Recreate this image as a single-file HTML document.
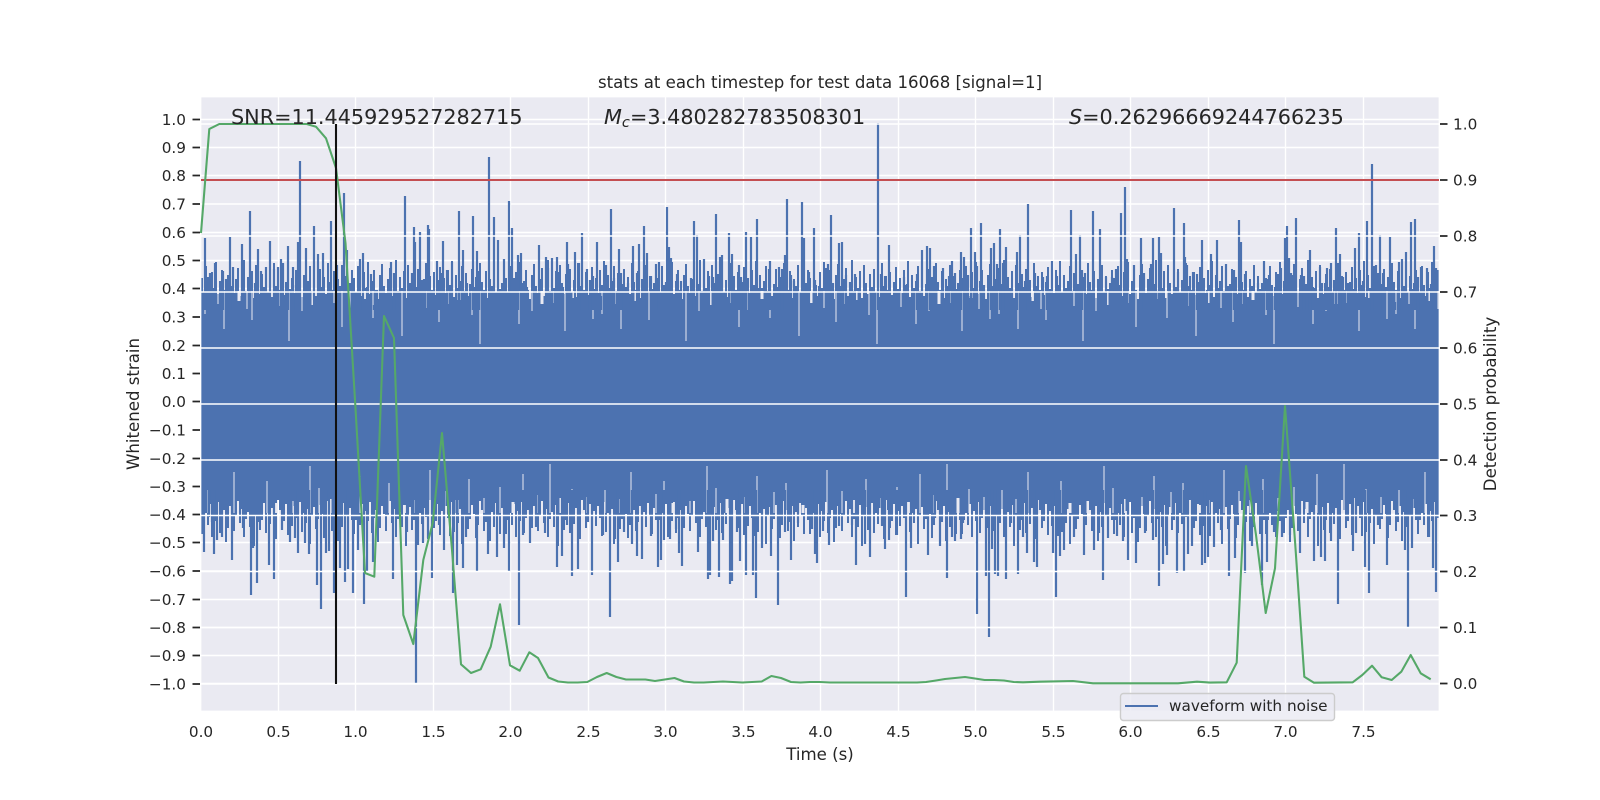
<!DOCTYPE html>
<html>
<head>
<meta charset="utf-8">
<title>stats at each timestep</title>
<style>
html,body{margin:0;padding:0;background:#fff;width:1600px;height:800px;overflow:hidden}
svg{display:block}
text{font-family:"DejaVu Sans","Liberation Sans",sans-serif;fill:#262626}
.t{font-size:15.28px}
.e{text-anchor:end}
.m{text-anchor:middle}
.a{font-size:20.76px}
</style>
</head>
<body>
<svg width="1600" height="800" viewBox="0 0 1600 800" xmlns="http://www.w3.org/2000/svg">
<defs>
<pattern id="band" patternUnits="userSpaceOnUse" x="201" y="0" width="152" height="800">
<path fill="#4c72b0" d="M0 278H2V292H4V266H6V285H8V296H10V272H12V288H14V262H16V294H18V281H20V270H22V290H24V299H26V275H28V264H30V286H32V293H34V279H36V268H38V296H40V284H42V260H44V291H46V277H48V288H50V271H52V298H54V265H56V283H58V294H60V274H62V287H64V269H66V292H68V280H70V297H72V263H74V286H76V276H78V290H80V272H82V295H84V282H86V267H88V289H90V278H92V293H94V270H96V285H98V261H100V297H102V275H104V288H106V281H108V266H110V291H112V273H114V296H116V284H118V269H120V287H122V277H124V294H126V263H128V282H130V290H132V271H134V298H136V279H138V286H140V265H142V292H144V276H146V289H148V283H150V270H152V520H150V508H148V534H146V515H144V503H142V527H140V512H138V541H136V506H134V522H132V531H130V510H128V501H126V525H124V538H122V514H120V505H118V519H116V529H114V507H112V516H110V544H108V509H106V523H104V513H102V532H100V502H98V536H96V518H94V506H92V526H90V511H88V535H86V504H84V521H82V528H80V510H78V500H76V539H74V517H72V508H70V524H68V513H66V533H64V503H62V520H60V530H58V507H56V515H54V546H52V505H50V527H48V512H46V519H44V537H42V509H40V523H38V501H36V516H34V531H32V514H30V506H28V528H26V542H24V510H22V518H20V533H18V502H16V521H14V511H12V537H10V504H8V525H6V513H4V520H2V534H0Z"/>
</pattern>
<pattern id="slits" patternUnits="userSpaceOnUse" x="201" y="0" width="397" height="800">
<path fill="none" stroke="#eaeaf2" stroke-width="1" d="M4 291V314M17 291V304M23 291V329M46 291V309M51 291V320M79 291V306M88 291V341M101 291V311M133 291V303M141 291V327M149 291V310M172 291V318M193 291V306M201 291V336M226 291V308M238 291V322M247 291V304M271 291V315M279 291V344M303 291V307M318 291V324M331 291V311M352 291V303M364 291V331M381 291V309M392 291V319M7 513V490M21 513V499M33 513V472M58 513V494M66 513V481M92 513V501M109 513V466M118 513V488M147 513V497M159 513V476M176 513V492M188 513V483M214 513V500M229 513V470M244 513V491M268 513V479M283 513V498M299 513V487M322 513V474M336 513V495M349 513V462M371 513V489M386 513V497"/>
<path fill="none" stroke="#eaeaf2" stroke-width="3" d="M38 291V301M112 291V305M164 291V299M213 291V303M258 291V300M341 291V304M373 291V298M75 513V503M129 513V499M205 513V505M256 513V500M312 513V502M360 513V498"/>
</pattern>
</defs>
<rect width="1600" height="800" fill="#fff"/>
<rect x="201" y="97" width="1238" height="614" fill="#eaeaf2"/>

<!-- primary grid -->
<path fill="none" stroke="#fff" stroke-width="1.4" d="M278.5 97V711M355.5 97V711M433.5 97V711M510.5 97V711M588.5 97V711M665.5 97V711M743.5 97V711M820.5 97V711M898.5 97V711M975.5 97V711M1053.5 97V711M1130.5 97V711M1208.5 97V711M1285.5 97V711M1363.5 97V711M201 119.5H1439M201 147.5H1439M201 175.5H1439M201 204H1439M201 232.5H1439M201 260.5H1439M201 288.5H1439M201 317H1439M201 345.5H1439M201 373.5H1439M201 401.5H1439M201 430H1439M201 458.5H1439M201 486.5H1439M201 514.5H1439M201 542.5H1439M201 571H1439M201 599.5H1439M201 627.5H1439M201 655.5H1439M201 684H1439"/>

<!-- waveform band -->
<rect x="201" y="250" width="1238" height="310" fill="url(#band)"/>
<rect x="201" y="280" width="1238" height="240" fill="url(#slits)"/>
<rect x="201" y="346" width="1238" height="118" fill="#4c72b0"/>

<!-- waveform spikes up -->
<path fill="none" stroke="#4c72b0" stroke-width="2.2" d="M205 310V238M208 310V277M210 310V273M215 310V263M223 310V271M226 310V279M230 310V237M233 310V267M242 310V244M243 310V282M250 310V211M255 310V283M258 310V249M261 310V271M266 310V267M270 310V241M274 310V269M278 310V267M281 310V259M283 310V263M288 310V246M293 310V267M296 310V285M298 310V242M300 310V161M306 310V248M314 310V226M318 310V254M323 310V253M331 310V221M337 310V265M344 310V193M347 310V250M353 310V282M360 310V259M363 310V253M367 310V287M371 310V274M374 310V305M377 310V290M380 310V288M383 310V311M389 310V288M391 310V262M394 310V273M397 310V294M405 310V196M412 310V273M414 310V227M415 310V242M420 310V232M424 310V279M428 310V225M429 310V229M437 310V261M439 310V280M442 310V273M443 310V241M447 310V270M452 310V262M459 310V211M463 310V250M467 310V283M473 310V216M477 310V251M479 310V271M489 310V157M494 310V217M498 310V240M504 310V259M509 310V201M512 310V228M514 310V278M518 310V255M521 310V253M523 310V283M527 310V287M539 310V245M546 310V257M548 310V268M552 310V258M557 310V257M558 310V272M563 310V287M567 310V242M568 310V264M575 310V252M579 310V263M582 310V233M587 310V269M590 310V280M593 310V276M597 310V242M601 310V296M606 310V265M611 310V209M614 310V278M619 310V249M621 310V273M624 310V290M628 310V283M633 310V246M637 310V273M639 310V244M644 310V226M647 310V253M651 310V276M656 310V264M659 310V262M666 310V282M667 310V207M669 310V247M671 310V258M677 310V274M681 310V281M691 310V278M694 310V221M697 310V235M704 310V259M709 310V276M713 310V277M716 310V214M720 310V257M722 310V255M729 310V233M732 310V254M739 310V265M741 310V277M744 310V280M746 310V232M751 310V237M757 310V219M759 310V288M765 310V287M769 310V269M770 310V261M779 310V267M782 310V269M785 310V255M787 310V199M791 310V275M794 310V281M797 310V287M802 310V202M804 310V238M809 310V272M814 310V228M815 310V280M819 310V286M826 310V268M828 310V264M831 310V215M833 310V283M839 310V243M842 310V242M846 310V275M850 310V282M855 310V274M872 310V297M878 310V123M881 310V274M885 310V276M889 310V245M904 310V277M907 310V284M917 310V274M922 310V250M927 310V246M930 310V248M934 310V266M943 310V268M949 310V276M952 310V261M955 310V273M961 310V252M964 310V257M968 310V275M971 310V228M975 310V252M977 310V266M981 310V223M984 310V285M991 310V248M994 310V243M997 310V264M1000 310V229M1003 310V263M1006 310V247M1012 310V288M1017 310V252M1020 310V235M1025 310V281M1028 310V204M1035 310V273M1043 310V277M1047 310V276M1052 310V261M1057 310V276M1062 310V292M1071 310V210M1076 310V254M1080 310V235M1082 310V270M1085 310V273M1093 310V211M1100 310V229M1106 310V277M1112 310V277M1116 310V269M1121 310V213M1125 310V187M1127 310V259M1134 310V265M1141 310V238M1144 310V273M1151 310V264M1153 310V238M1159 310V237M1161 310V253M1169 310V288M1174 310V208M1178 310V272M1184 310V223M1185 310V257M1187 310V265M1193 310V272M1197 310V274M1202 310V240M1207 310V290M1211 310V254M1217 310V240M1226 310V264M1228 310V286M1234 310V270M1239 310V220M1241 310V242M1245 310V274M1248 310V297M1258 310V283M1264 310V261M1267 310V279M1269 310V275M1275 310V287M1278 310V274M1281 310V268M1285 310V238M1287 310V226M1289 310V258M1291 310V273M1296 310V218M1301 310V275M1304 310V276M1307 310V297M1310 310V250M1313 310V287M1320 310V267M1325 310V283M1327 310V268M1331 310V263M1336 310V228M1340 310V254M1343 310V277M1348 310V283M1355 310V248M1359 310V233M1363 310V281M1367 310V221M1369 310V298M1372 310V164M1375 310V270M1376 310V265M1380 310V235M1383 310V273M1390 310V237M1392 310V312M1395 310V302M1399 310V262M1402 310V259M1406 310V252M1411 310V222M1415 310V219M1418 310V277M1421 310V267M1427 310V268M1431 310V284M1434 310V246M1436 310V268"/>

<!-- waveform spikes down -->
<path fill="none" stroke="#4c72b0" stroke-width="2.2" d="M204 490V552M209 490V517M212 490V522M214 490V554M217 490V540M222 490V537M232 490V560M243 490V528M251 490V595M253 490V548M257 490V583M259 490V522M269 490V565M274 490V579M282 490V530M290 490V542M295 490V538M298 490V553M305 490V543M309 490V554M317 490V585M321 490V609M326 490V553M329 490V551M334 490V593M340 490V568M345 490V582M348 490V569M353 490V593M358 490V550M364 490V604M367 490V572M373 490V562M378 490V520M393 490V579M407 490V532M416 490V683M418 490V545M423 490V543M428 490V538M432 490V578M439 490V525M444 490V550M453 490V593M457 490V565M463 490V568M466 490V537M477 490V572M488 490V554M497 490V557M504 490V548M509 490V571M519 490V625M523 490V535M530 490V543M536 490V527M545 490V533M557 490V567M562 490V556M567 490V525M572 490V576M578 490V569M588 490V522M592 490V575M603 490V535M610 490V617M615 490V539M618 490V562M624 490V532M632 490V544M637 490V556M642 490V559M651 490V536M658 490V567M661 490V560M664 490V540M670 490V539M676 490V529M679 490V553M682 490V566M698 490V552M708 490V579M710 490V575M713 490V541M719 490V577M723 490V540M730 490V584M732 490V581M737 490V532M740 490V561M746 490V575M753 490V575M756 490V598M762 490V548M771 490V556M778 490V605M785 490V532M791 490V560M798 490V523M812 490V529M815 490V554M817 490V563M823 490V531M829 490V545M839 490V526M852 490V525M856 490V565M865 490V544M870 490V557M882 490V526M885 490V549M889 490V540M897 490V535M906 490V597M911 490V548M928 490V555M935 490V518M940 490V546M947 490V578M952 490V537M955 490V541M961 490V539M963 490V523M977 490V614M986 490V576M989 490V637M992 490V549M995 490V574M998 490V576M1006 490V579M1011 490V523M1018 490V574M1023 490V537M1027 490V553M1034 490V562M1037 490V567M1043 490V521M1053 490V553M1056 490V597M1060 490V556M1064 490V550M1074 490V537M1084 490V555M1094 490V550M1099 490V533M1103 490V580M1108 490V538M1117 490V536M1123 490V541M1128 490V560M1136 490V563M1145 490V533M1153 490V540M1159 490V586M1163 490V564M1167 490V555M1177 490V573M1184 490V571M1188 490V554M1192 490V546M1202 490V565M1205 490V563M1208 490V557M1214 490V547M1221 490V530M1229 490V576M1235 490V558M1245 490V573M1252 490V546M1262 490V585M1267 490V562M1274 490V532M1282 490V537M1290 490V535M1300 490V553M1314 490V561M1321 490V557M1325 490V561M1331 490V541M1338 490V604M1353 490V551M1356 490V533M1365 490V567M1369 490V593M1378 490V525M1387 490V565M1405 490V550M1408 490V627M1412 490V548M1423 490V512M1429 490V537M1433 490V568M1436 490V592"/>

<!-- secondary grid over the waveform -->
<path fill="none" stroke="#fff" stroke-width="1.4" d="M201 124H1439M201 180H1439M201 236H1439M201 292H1439M201 348H1439M201 404H1439M201 460H1439M201 515.5H1439M201 571.5H1439M201 627.5H1439M201 683.5H1439"/>

<!-- spines -->
<path fill="none" stroke="#fff" stroke-width="1.7" d="M200.5 96V712M1439.5 96V712M200 96.5H1440M200 711.5H1440"/>

<!-- threshold, marker, probability -->
<path fill="none" stroke="#c44e52" stroke-width="2.08" d="M201 180H1439"/>
<path fill="none" stroke="#55a868" stroke-width="2.08" stroke-linejoin="round" d="M201 233L209.3 129L219.3 124L306.7 124L316 126.7L326 138.3L336 168L345.5 243L355.3 405L365 573L374.3 576.7L384 316L394 338L403.3 615L413.3 644L423.3 560L432.7 523L442 433L452 550L461 664.3L471 673L480.7 669.3L490.7 646.7L500 604.3L510 665.3L519.7 670.7L529.3 652.3L538 658L548.5 677.5L558.2 681.5L567.9 682.5L577.6 682.5L587.3 682L597 677L606.7 673L616.4 677L626 679.5L645.4 679.5L655 681L664.8 679.5L674.5 678L684 681.5L694 682.5L703.6 682.5L713.3 682L723 681.5L732.7 682L742.3 682.5L752 682L761.7 681.5L771.4 676L781 678L791 682L800.5 682.5L810 682L820 682L830 682.5L917 682.5L926 682L936 680.5L945 679L955 678L965 677L975 678.5L984.6 680L994.3 680L1004 680.5L1013.7 682L1023 682.3L1040 681.7L1073 681L1093 683.3L1178 683.3L1197 681.7L1210 682.6L1226.7 682.3L1236.7 662.7L1246 466L1256 535L1265.7 613L1275 568.3L1285 406L1295 541L1304.3 676.7L1314 682.7L1352.7 682.3L1362.3 675L1372 665.7L1381.7 677.3L1391.7 680L1401.3 671.7L1410.7 655L1420.7 673.3L1430.7 679.3"/>
<path fill="none" stroke="#111" stroke-width="2.08" d="M336 124V684"/>

<!-- tick marks -->
<path fill="none" stroke="#262626" stroke-width="1.7" d="M192.5 119.5H200M192.5 147.5H200M192.5 175.5H200M192.5 204H200M192.5 232.5H200M192.5 260.5H200M192.5 288.5H200M192.5 317H200M192.5 345.5H200M192.5 373.5H200M192.5 401.5H200M192.5 430H200M192.5 458.5H200M192.5 486.5H200M192.5 514.5H200M192.5 542.5H200M192.5 571H200M192.5 599.5H200M192.5 627.5H200M192.5 655.5H200M192.5 684H200M1440 124H1447.5M1440 180H1447.5M1440 236H1447.5M1440 292H1447.5M1440 348H1447.5M1440 404H1447.5M1440 460H1447.5M1440 515.5H1447.5M1440 571.5H1447.5M1440 627.5H1447.5M1440 683.5H1447.5"/>

<!-- left tick labels -->
<g transform="translate(0 .5)">
<text class="t e" x="186" y="124.5">1.0</text>
<text class="t e" x="186" y="152.5">0.9</text>
<text class="t e" x="186" y="180.5">0.8</text>
<text class="t e" x="186" y="209">0.7</text>
<text class="t e" x="186" y="237.5">0.6</text>
<text class="t e" x="186" y="265.5">0.5</text>
<text class="t e" x="186" y="293.5">0.4</text>
<text class="t e" x="186" y="322">0.3</text>
<text class="t e" x="186" y="350.5">0.2</text>
<text class="t e" x="186" y="378.5">0.1</text>
<text class="t e" x="186" y="406.5">0.0</text>
<text class="t e" x="186" y="435">−0.1</text>
<text class="t e" x="186" y="463.5">−0.2</text>
<text class="t e" x="186" y="491.5">−0.3</text>
<text class="t e" x="186" y="519.5">−0.4</text>
<text class="t e" x="186" y="547.5">−0.5</text>
<text class="t e" x="186" y="576">−0.6</text>
<text class="t e" x="186" y="604.5">−0.7</text>
<text class="t e" x="186" y="632.5">−0.8</text>
<text class="t e" x="186" y="660.5">−0.9</text>
<text class="t e" x="186" y="689">−1.0</text>
</g>

<!-- right tick labels -->
<g transform="translate(-1 .5)">
<text class="t" x="1454" y="129">1.0</text>
<text class="t" x="1454" y="185">0.9</text>
<text class="t" x="1454" y="241">0.8</text>
<text class="t" x="1454" y="297">0.7</text>
<text class="t" x="1454" y="353">0.6</text>
<text class="t" x="1454" y="409">0.5</text>
<text class="t" x="1454" y="465">0.4</text>
<text class="t" x="1454" y="520.5">0.3</text>
<text class="t" x="1454" y="576.5">0.2</text>
<text class="t" x="1454" y="632.5">0.1</text>
<text class="t" x="1454" y="688.5">0.0</text>
</g>

<!-- x tick labels -->
<text class="t m" x="201" y="737">0.0</text>
<text class="t m" x="278.5" y="737">0.5</text>
<text class="t m" x="355.5" y="737">1.0</text>
<text class="t m" x="433.5" y="737">1.5</text>
<text class="t m" x="510.5" y="737">2.0</text>
<text class="t m" x="588.5" y="737">2.5</text>
<text class="t m" x="665.5" y="737">3.0</text>
<text class="t m" x="743.5" y="737">3.5</text>
<text class="t m" x="820.5" y="737">4.0</text>
<text class="t m" x="898.5" y="737">4.5</text>
<text class="t m" x="975.5" y="737">5.0</text>
<text class="t m" x="1053.5" y="737">5.5</text>
<text class="t m" x="1130.5" y="737">6.0</text>
<text class="t m" x="1208.5" y="737">6.5</text>
<text class="t m" x="1285.5" y="737">7.0</text>
<text class="t m" x="1363.5" y="737">7.5</text>

<!-- labels -->
<text class="m" x="820" y="88" style="font-size:16.6px">stats at each timestep for test data 16068 [signal=1]</text>
<text class="m" x="820" y="760" style="font-size:16.6px">Time (s)</text>
<text class="m" style="font-size:16.6px" transform="translate(139 404) rotate(-90)">Whitened strain</text>
<text class="m" style="font-size:16.6px" transform="translate(1496 404) rotate(-90)">Detection probability</text>

<!-- annotations -->
<text class="a" x="231" y="124">SNR=11.445929527282715</text>
<text class="a" x="604" y="124"><tspan font-style="italic">M</tspan><tspan font-style="italic" font-size="14.6" dy="3">c</tspan><tspan dy="-3">=3.480282783508301</tspan></text>
<text class="a" x="1069" y="124"><tspan font-style="italic">S</tspan>=0.26296669244766235</text>

<!-- legend -->
<rect x="1120.5" y="693.5" width="214" height="27" rx="3" ry="3" fill="#eaeaf2" fill-opacity="0.8" stroke="#cccccc" stroke-width="1.4"/>
<path fill="none" stroke="#4c72b0" stroke-width="2.08" d="M1125 706H1158"/>
<text x="1169" y="711" style="font-size:15.28px">waveform with noise</text>
</svg>
</body>
</html>
